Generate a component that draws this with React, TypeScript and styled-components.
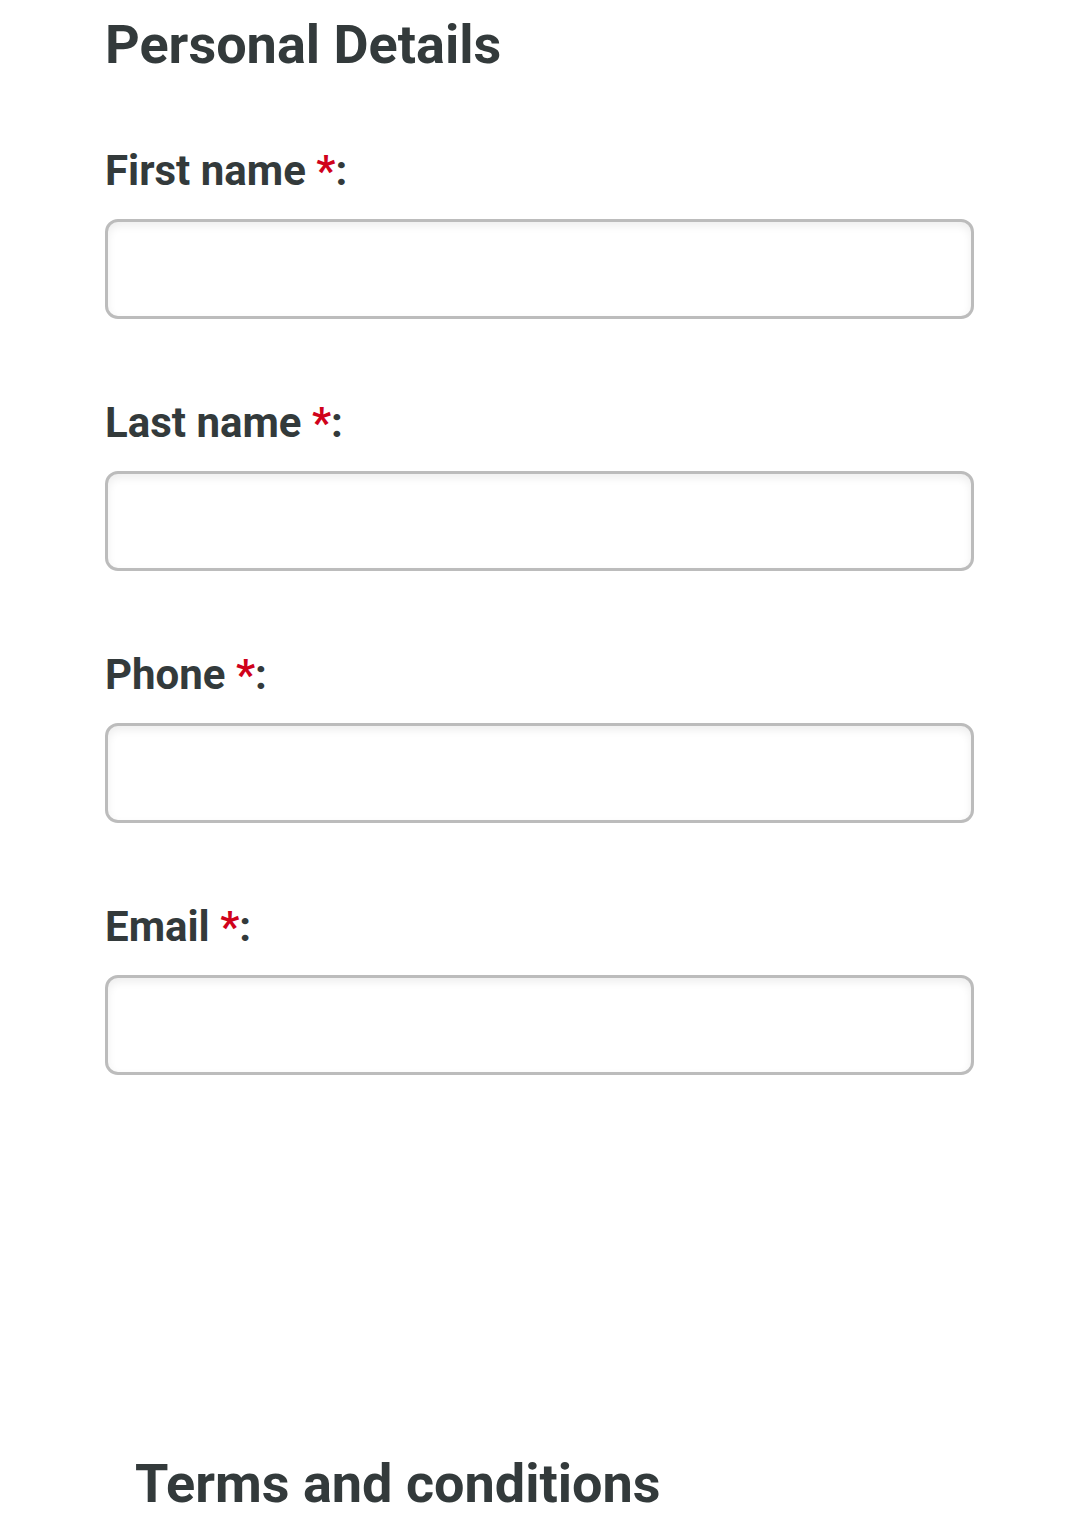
import React from 'react';
import styled, { createGlobalStyle } from 'styled-components';

const GlobalStyle = createGlobalStyle`
  body {
    margin: 0;
    background: #ffffff;
    font-family: Roboto, 'Liberation Sans', sans-serif;
  }
`;

const Page = styled.div`
  padding: 18px 0 0 105px;
  width: 869px;
`;

const Heading = styled.h2<{ $indent?: number }>`
  margin: 0;
  padding-left: ${(p) => p.$indent ?? 0}px;
  font-size: 54px;
  line-height: 54px;
  font-weight: 700;
  color: #333a3b;
`;

const Form = styled.div`
  display: flex;
  flex-direction: column;
  gap: 83px;
  margin-top: 78px;
`;

const Field = styled.div`
  display: flex;
  flex-direction: column;
  gap: 27px;
`;

const Label = styled.label`
  font-size: 42px;
  line-height: 42px;
  font-weight: 700;
  color: #333a3b;
`;

const Required = styled.span`
  color: #d0021b;
`;

const Input = styled.input`
  box-sizing: border-box;
  width: 100%;
  height: 100px;
  border: 3px solid #bcbcbc;
  border-radius: 13px;
  background: #ffffff;
  box-shadow: inset 0 4px 8px rgba(0, 0, 0, 0.07);
  outline: none;
`;

const Terms = styled.div`
  margin-top: 382px;
`;

const fields = ['First name', 'Last name', 'Phone', 'Email'];

const App: React.FC = () => (
  <>
    <GlobalStyle />
    <Page>
      <Heading>Personal Details</Heading>
      <Form>
        {fields.map((name) => (
          <Field key={name}>
            <Label>
              {name} <Required>*</Required>:
            </Label>
            <Input type="text" />
          </Field>
        ))}
      </Form>
      <Terms>
        <Heading $indent={30}>Terms and conditions</Heading>
      </Terms>
    </Page>
  </>
);

export default App;
